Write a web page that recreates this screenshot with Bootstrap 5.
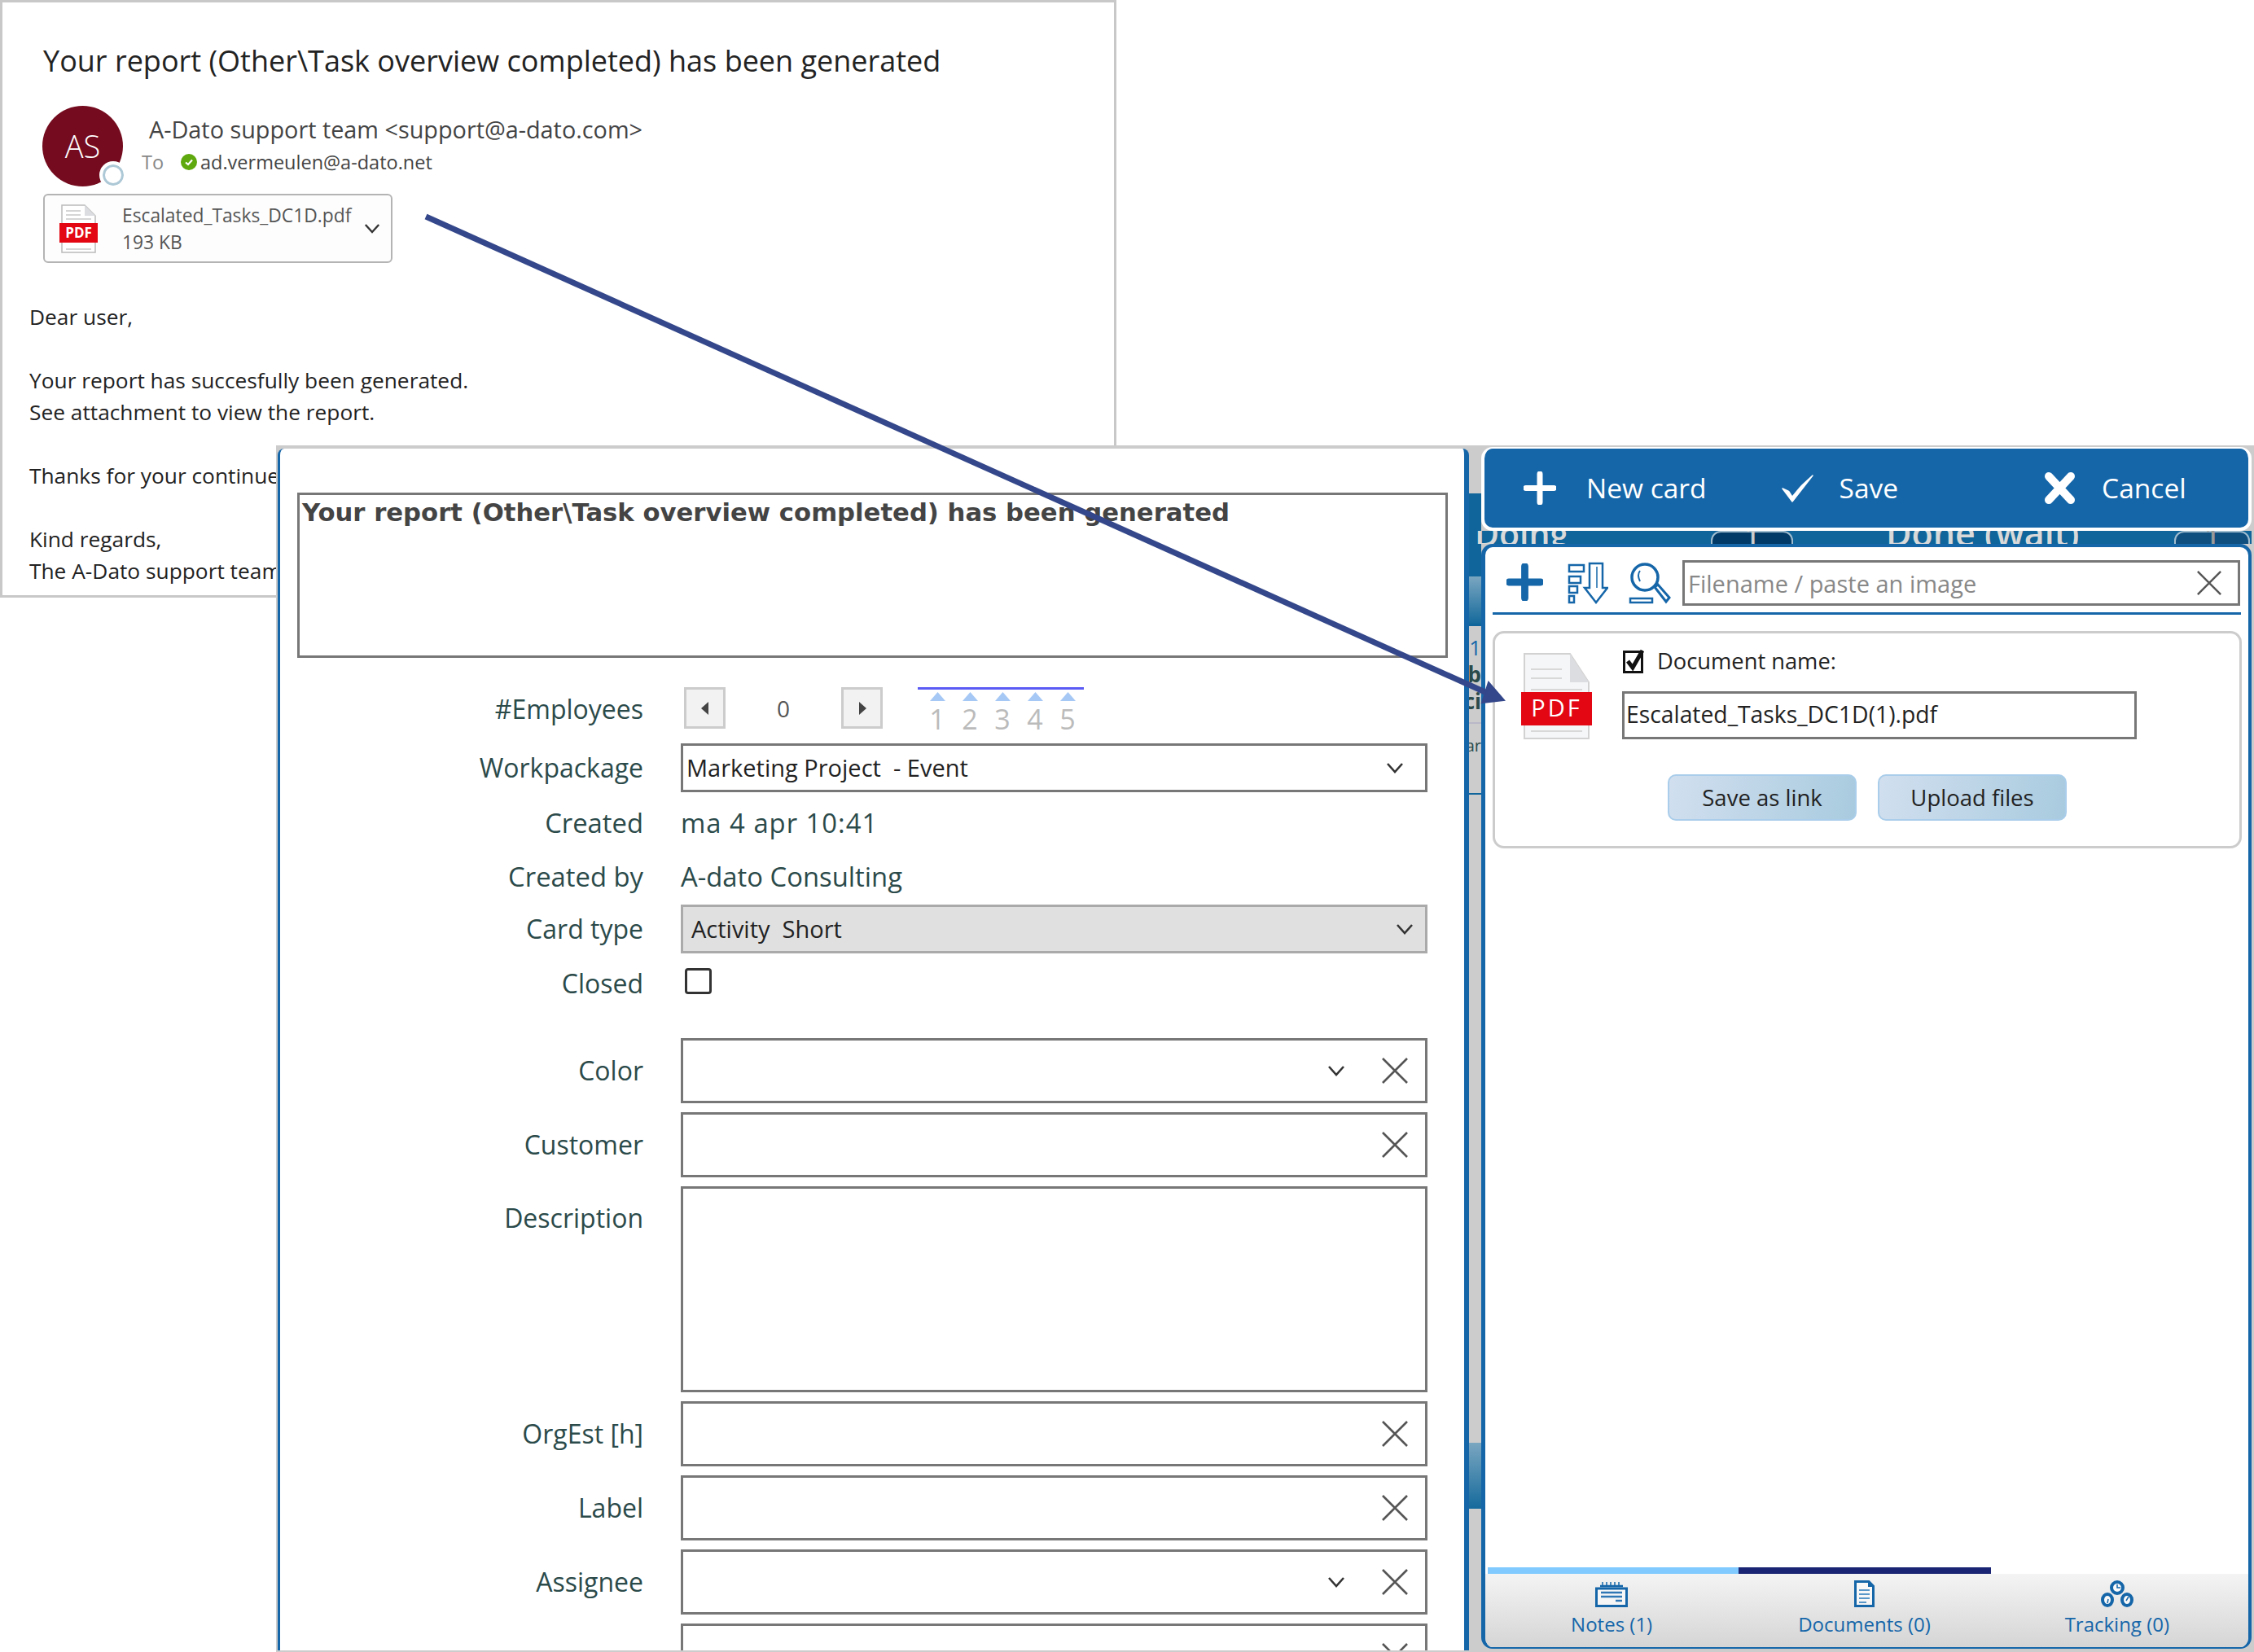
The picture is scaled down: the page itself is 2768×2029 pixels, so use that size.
<!DOCTYPE html>
<html lang="en">
<head>
    <meta charset="UTF-8">
    <title>Report mail and card</title>
    <link href="https://cdn.jsdelivr.net/npm/bootstrap@5.3.0/dist/css/bootstrap.min.css" rel="stylesheet">
    <style>
        html, body { margin: 0; background: #fff; }
        body { font-family: "Open Sans", "Noto Sans", sans-serif; }
        .stage { position: relative; width: 2768px; height: 2029px; overflow: hidden; }

        /* mail window */
        .mail-win { position: absolute; left: 0; top: 0; width: 1371px; height: 734px; border: 3px solid #c8c8c8; background: #fff; color: #222; }
        .mail-subject { font-size: 36px; line-height: 50px; margin: 47px 0 0 50px; color: #222; white-space: nowrap; }
        .mail-head { margin: 30px 0 0 49px; height: 99px; }
        .avatar { position: relative; width: 99px; height: 99px; flex: none; background: #740b1e; color: #fff; font-size: 38px; font-weight: 300; }
        .avatar-dot { position: absolute; right: -5px; bottom: -3px; width: 34px; height: 34px; border-radius: 50%; border: 4px solid #fff; box-shadow: inset 0 0 0 3px #adc8d6; background: #fff; }
        .mail-from { font-size: 28.800px; line-height: 40px; color: #444; margin: 9px 0 0 32px; white-space: nowrap; }
        .mail-to { font-size: 23.500px; line-height: 30px; color: #444; margin: 5px 0 0 23px; white-space: nowrap; }
        .mail-to .to-word { color: #888; width: 48px; }
        .attach { width: 429px; height: 85px; margin: 9px 0 0 50px; border: 2px solid #b4b4b4; border-radius: 6px; background: #fdfdfd; padding-left: 18px; }
        .attach-name { font-size: 22.800px; line-height: 33px; color: #555; margin-left: 30px; width: 297px; white-space: nowrap; }
        .mail-body { margin: 47px 0 0 33px; font-size: 26.300px; line-height: 39px; color: #222; white-space: nowrap; }
        .mail-body p { margin: 0 0 39px; }

        /* card window */
        .app-win { position: absolute; left: 339px; top: 547px; width: 2429px; height: 1482px; background: #ccc; padding: 4px 3px 4px 2px; }
        .form-win { width: 1463px; background: #fff; border-left: 3px solid #1566a9; border-right: 6px solid #1566a9; border-radius: 8px 8px 0 0; overflow: hidden; padding-top: 54px; flex: none; height: 1476px; }
        .title-box { width: 1413px; height: 203px; margin-left: 21px; border: 3px solid #777; font-family: "DejaVu Sans", sans-serif; font-weight: 700; font-size: 30.700px; line-height: 38px; color: #444; padding: 3px; white-space: nowrap; }
        .frm-row { display: flex; margin-top: 11px; }
        .frm-lbl { width: 446px; flex: none; text-align: right; color: #2b4a4a; font-size: 32px; line-height: 38px; white-space: nowrap; }
        .frm-val { margin-left: 46px; width: 917px; flex: none; }
        .box { border: 3px solid #777; background: #fff; height: 80px; padding-right: 20px; gap: 44px; }
        .box-sel { height: 60px; padding-right: 26px; color: #222; font-size: 29px; }
        .box-grey { background: #e0e0e0; border-color: #aaa; padding-right: 14px; }
        .box-sel .box-txt { padding-left: 4px; }
        .box-grey .box-txt { padding-left: 10px; }
        .box-tall { height: 253px; }
        .lbl-tall { padding-top: 20px; }
        .info-txt { color: #2b4a4a; font-size: 32.800px; line-height: 44px; }
        .date-txt { letter-spacing: 1px; }
        .row-spin { margin-top: 36px; }
        .row-wp { margin-top: 18px; }
        .row-created { margin-top: 16px; }
        .row-by { margin-top: 22px; }
        .row-type { margin-top: 12px; }
        .row-closed { margin-top: 18px; }
        .row-color { margin-top: 48px; }
        .spin-btn { width: 51px; height: 51px; background: #f2f2f2; border: 3px solid #ccc; border-radius: 0; padding: 0; }
        .spin-val { width: 142px; text-align: center; font-size: 28px; color: #555; }
        .ruler { margin-left: 43px; width: 204px; height: 51px; border-top: 3px solid #5a5af5; padding: 3px 0 0 4px; }
        .ruler-num { width: 40px; text-align: center; line-height: 1; font-size: 34px; color: #bbb; }
        .ruler-tick { display: block; margin: 0 auto 5px; }
        .closed-chk { width: 33px; height: 32px; margin: 0 0 0 5px; border: 3px solid #333; border-radius: 0; }

        /* bits of the board behind the panels */
        .board-strip { width: 15px; flex: none; }
        .strip-blue { height: 102px; margin-top: 55px; background: #10659a; }
        .strip-grad { height: 61px; background: linear-gradient(#7aa6c0, #156a9c); border-bottom: 3px solid #10659a; }
        .strip-txt { display: flex; justify-content: flex-end; font-size: 26px; font-weight: 700; color: #2b4a4a; line-height: 33px; overflow: hidden; white-space: nowrap; height: 33px; }
        .strip-first { margin-top: 10px; font-weight: 400; color: #1566a9; }
        .strip-faint { height: 2px; background: #b8b8c8; margin-top: 9px; }
        .strip-last { margin-top: 10px; height: 30px; font-size: 20px; font-weight: 400; }
        .strip-line { height: 2px; background: #10659a; margin-top: 45px; }
        .strip-thumb { height: 81px; margin-top: 796px; background: linear-gradient(#7aa6c0, #156a9c); }

        /* right panel */
        .side-win { width: 946px; flex: none; }
        .tool-win { height: 103px; margin-top: -2px; background: #1566a9; border: solid #fff; border-width: 2px 4px 4px; border-radius: 14px; color: #fff; font-size: 33.500px; position: relative; z-index: 2; }
        .tool-plus { margin-left: 48px; }
        .tool-new { margin-left: 37px; }
        .tool-check { margin-left: 91px; }
        .tool-save { margin-left: 31px; }
        .tool-x { margin-left: 179px; }
        .tool-cancel { margin-left: 32px; }
        .band { height: 16px; margin-left: -15px; background: #10659a; overflow: hidden; color: #d9d9d9; font-size: 41px; font-weight: 600; line-height: 6px; }
        .band-doing { margin-left: 7px; width: 290px; }
        .band-done { margin-left: 114px; width: 354px; font-size: 43px; }
        .pill { height: 30px; border: 2px solid #9fbccf; background: #013a66; border-radius: 12px; color: #ccc; text-align: center; font-size: 32px; }
        .pill-one { width: 101px; }
        .pill-two { width: 93px; background: #0f4f80; color: #999; }
        .side-body { height: 1357px; background: #fff; border: solid #1566a9; border-width: 4px 4px 2px 5px; border-radius: 14px; overflow: hidden; }
        .search-row { height: 83px; margin: 0 9px; border-bottom: 3px solid #1566a9; padding: 16px 1px 0 17px; }
        .ic-plus { margin-top: 4px; }
        .ic-sort { margin: 2px 0 0 30px; flex: none; }
        .ic-find { margin: 2px 0 0 25px; flex: none; }
        .fname-wrap { margin-left: 14px; }
        .fname-x { right: 22px; top: 12px; }
        .fname-inp { width: 685px; height: 56px; border: 3px solid #777; border-radius: 0; padding: 0 4px; font-size: 29px; color: #444; }
        .fname-inp::placeholder { color: #888; opacity: 1; }
        .doc-card { height: 267px; margin: 20px 8px 0 9px; border: 3px solid #ccc; border-radius: 14px; padding: 24px 0 0 32px; }
        .doc-col { margin: -6px 0 0 38px; }
        .doc-lbl { font-size: 27.300px; line-height: 32px; color: #222; margin-left: 16px; }
        .doc-inp { width: 632px; height: 59px; border: 3px solid #777; border-radius: 0; padding: 0 2px 4px; font-size: 28.300px; color: #222; margin: 21px 0 0 -1px; }
        .doc-btns { gap: 26px; margin: 42px 0 0 180px; }
        .doc-btn { width: 232px; height: 57px; background: linear-gradient(100deg, #d1dfef, #a9cbdf); border: 2px solid #a9cdea; border-radius: 10px; font-size: 27.500px; color: #222; padding: 0; }
        .tab-bars { height: 8px; }
        .tab-bar1 { width: 308px; background: #80caff; margin-left: 3px; }
        .tab-bar2 { width: 310px; background: #1a2573; }
        .tab-foot { height: 90px; padding-right: 6px; background: linear-gradient(#f4f4f4, #d5d5d5); color: #1566a9; font-size: 24px; }
        .tab-lbl { line-height: 41px; }
        .wire-arrow { position: absolute; left: 0; top: 0; z-index: 5; pointer-events: none; }
    </style>
</head>
<body>
<svg width="0" height="0" class="position-absolute">
    <defs>
        <symbol id="ic-x" viewBox="0 0 34 32"><path d="M2 1 32 31M32 1 2 31" fill="none" stroke="#555" stroke-width="2.600"/></symbol>
        <symbol id="ic-chev" viewBox="0 0 22 14"><path d="M2 2 11 12 20 2" fill="none" stroke="#333" stroke-width="2.600"/></symbol>
        <symbol id="ic-pdf" viewBox="0 0 87 107">
            <path d="M4 1H60L83 36V105H4Z" fill="#f5f6f7" stroke="#d2d2d2" stroke-width="2"/>
            <path d="M60 1V36H83Z" fill="#dcdde0"/>
            <path d="M12 20H50M12 31H50M12 45H75M12 96H75" fill="none" stroke="#d8d8d8" stroke-width="2"/>
            <rect y="48" width="87" height="41" fill="#e30613"/>
            <text x="43.500" y="78" text-anchor="middle" fill="#fff" font-family="Open Sans, sans-serif" font-size="29" letter-spacing="3">PDF</text>
        </symbol>
        <symbol id="ic-pdf-sm" viewBox="0 0 47 60">
            <path d="M3 1H31L44 14V59H3Z" fill="#fff" stroke="#bbb" stroke-width="1.500"/>
            <path d="M31 1V14H44Z" fill="#dcdde0"/>
            <path d="M8 8H26M8 13H26M8 18H39M8 55H39" fill="none" stroke="#c8c8c8" stroke-width="1.500"/>
            <rect y="23" width="47" height="24" fill="#e30613"/>
            <text x="23.500" y="41" text-anchor="middle" fill="#fff" font-family="Open Sans, sans-serif" font-weight="700" font-size="17">PDF</text>
        </symbol>
    </defs>
</svg>

<div class="stage">
    <!-- mail -->
    <div class="mail-win">
        <div class="mail-subject">Your report (Other\Task overview completed) has been generated</div>
        <div class="mail-head d-flex">
            <div class="avatar rounded-circle d-flex align-items-center justify-content-center">AS<span class="avatar-dot"></span></div>
            <div>
                <div class="mail-from">A-Dato support team &lt;support@a-dato.com&gt;</div>
                <div class="mail-to d-flex align-items-center">
                    <span class="to-word">To</span>
                    <svg width="20" height="20" viewBox="0 0 20 20" class="me-1"><circle cx="10" cy="10" r="10" fill="#5fa80e"/><path d="M6 10.500 9 13 14 7.500" fill="none" stroke="#fff" stroke-width="2.200"/></svg>
                    <span>ad.vermeulen@a-dato.net</span>
                </div>
            </div>
        </div>
        <div class="attach d-flex align-items-center">
            <svg width="47" height="60"><use href="#ic-pdf-sm"/></svg>
            <div class="attach-name">Escalated_Tasks_DC1D.pdf<br>193 KB</div>
            <svg width="20" height="13"><use href="#ic-chev"/></svg>
        </div>
        <div class="mail-body">
            <p>Dear user,</p>
            <p>Your report has succesfully been generated.<br>See attachment to view the report.</p>
            <p>Thanks for your continued support.</p>
            <p>Kind regards,<br>The A-Dato support team</p>
        </div>
    </div>

    <!-- card + panel -->
    <div class="app-win d-flex">
        <div class="form-win">
            <div class="title-box">Your report (Other\Task overview completed) has been generated</div>

            <div class="frm-row row-spin">
                <div class="frm-lbl pt-2">#Employees</div>
                <div class="frm-val d-flex">
                    <button class="btn spin-btn ms-1 d-flex align-items-center justify-content-center"><svg width="10" height="16"><path d="M9 0V16L0 8Z" fill="#444"/></svg></button>
                    <div class="spin-val align-self-center">0</div>
                    <button class="btn spin-btn d-flex align-items-center justify-content-center"><svg width="10" height="16"><path d="M1 0V16L10 8Z" fill="#444"/></svg></button>
                    <div class="ruler">
                        <div class="d-flex justify-content-center">
                            <div class="ruler-num"><svg width="19" height="11" class="ruler-tick"><path d="M9.500 0 19 11H0Z" fill="#a6c8f5"/></svg>1</div>
                            <div class="ruler-num"><svg width="19" height="11" class="ruler-tick"><path d="M9.500 0 19 11H0Z" fill="#a6c8f5"/></svg>2</div>
                            <div class="ruler-num"><svg width="19" height="11" class="ruler-tick"><path d="M9.500 0 19 11H0Z" fill="#a6c8f5"/></svg>3</div>
                            <div class="ruler-num"><svg width="19" height="11" class="ruler-tick"><path d="M9.500 0 19 11H0Z" fill="#a6c8f5"/></svg>4</div>
                            <div class="ruler-num"><svg width="19" height="11" class="ruler-tick"><path d="M9.500 0 19 11H0Z" fill="#a6c8f5"/></svg>5</div>
                        </div>
                    </div>
                </div>
            </div>

            <div class="frm-row row-wp">
                <div class="frm-lbl align-self-center">Workpackage</div>
                <div class="frm-val box box-sel d-flex align-items-center justify-content-between">
                    <span class="box-txt">Marketing Project &nbsp;- Event</span>
                    <svg width="22" height="14"><use href="#ic-chev"/></svg>
                </div>
            </div>
            <div class="frm-row row-created">
                <div class="frm-lbl info-txt">Created</div>
                <div class="frm-val info-txt date-txt">ma 4 apr 10:41</div>
            </div>
            <div class="frm-row row-by">
                <div class="frm-lbl info-txt">Created by</div>
                <div class="frm-val info-txt">A-dato Consulting</div>
            </div>
            <div class="frm-row row-type">
                <div class="frm-lbl align-self-center">Card type</div>
                <div class="frm-val box box-sel box-grey d-flex align-items-center justify-content-between">
                    <span class="box-txt">Activity &nbsp;Short</span>
                    <svg width="22" height="14"><use href="#ic-chev"/></svg>
                </div>
            </div>
            <div class="frm-row row-closed">
                <div class="frm-lbl align-self-center">Closed</div>
                <div class="frm-val d-flex"><input class="form-check-input closed-chk" type="checkbox" aria-label="Closed"></div>
            </div>

            <div class="frm-row row-color">
                <div class="frm-lbl align-self-center">Color</div>
                <div class="frm-val box d-flex align-items-center justify-content-end">
                    <svg width="22" height="14"><use href="#ic-chev"/></svg>
                    <svg width="34" height="32"><use href="#ic-x"/></svg>
                </div>
            </div>
            <div class="frm-row">
                <div class="frm-lbl align-self-center">Customer</div>
                <div class="frm-val box d-flex align-items-center justify-content-end">
                    <svg width="34" height="32"><use href="#ic-x"/></svg>
                </div>
            </div>
            <div class="frm-row">
                <div class="frm-lbl lbl-tall">Description</div>
                <div class="frm-val box box-tall"></div>
            </div>
            <div class="frm-row">
                <div class="frm-lbl align-self-center">OrgEst [h]</div>
                <div class="frm-val box d-flex align-items-center justify-content-end">
                    <svg width="34" height="32"><use href="#ic-x"/></svg>
                </div>
            </div>
            <div class="frm-row">
                <div class="frm-lbl align-self-center">Label</div>
                <div class="frm-val box d-flex align-items-center justify-content-end">
                    <svg width="34" height="32"><use href="#ic-x"/></svg>
                </div>
            </div>
            <div class="frm-row">
                <div class="frm-lbl align-self-center">Assignee</div>
                <div class="frm-val box d-flex align-items-center justify-content-end">
                    <svg width="22" height="14"><use href="#ic-chev"/></svg>
                    <svg width="34" height="32"><use href="#ic-x"/></svg>
                </div>
            </div>
            <div class="frm-row">
                <div class="frm-lbl"></div>
                <div class="frm-val box d-flex align-items-center justify-content-end">
                    <svg width="22" height="14"><use href="#ic-chev"/></svg>
                    <svg width="34" height="32"><use href="#ic-x"/></svg>
                </div>
            </div>
        </div>

        <div class="board-strip">
            <div class="strip-blue"></div>
            <div class="strip-grad"></div>
            <div class="strip-txt strip-first">01</div>
            <div class="strip-txt">b</div>
            <div class="strip-txt">ci</div>
            <div class="strip-faint"></div>
            <div class="strip-txt strip-last">ar</div>
            <div class="strip-line"></div>
            <div class="strip-thumb"></div>
        </div>

        <div class="side-win">
            <div class="tool-win d-flex align-items-center">
                <svg width="40" height="41" viewBox="0 0 40 41" class="tool-plus"><path d="M20 3V38M3 20.500H37" fill="none" stroke="#fff" stroke-width="7" stroke-linecap="round"/></svg>
                <span class="tool-new">New card</span>
                <svg width="41" height="36" viewBox="0 0 41 36" class="tool-check"><path d="M2 18 14 34 39 2 15 24Z" fill="#fff" stroke="#fff" stroke-width="1.500" stroke-linejoin="round"/><path d="M9 19 14 27 28 10 15 21Z" fill="#1566a9"/></svg>
                <span class="tool-save">Save</span>
                <svg width="39" height="39" viewBox="0 0 39 39" class="tool-x"><path d="M6 5 33 34M33 5 6 34" fill="none" stroke="#fff" stroke-width="10" stroke-linecap="round"/></svg>
                <span class="tool-cancel">Cancel</span>
            </div>
            <div class="band d-flex">
                <span class="band-doing">Doing</span>
                <span class="pill pill-one">1</span>
                <span class="band-done">Done (wait)</span>
                <span class="pill pill-two">1</span>
            </div>
            <div class="side-body d-flex flex-column">
                <div class="search-row d-flex align-items-start">
                    <svg width="46" height="46" viewBox="0 0 46 46" class="ic-plus"><path d="M23 3V43M3 23H43" fill="none" stroke="#1566a9" stroke-width="9" stroke-linecap="round"/></svg>
                    <svg width="50" height="52" viewBox="0 0 50 52" class="ic-sort">
                        <g fill="none" stroke="#1566a9" stroke-width="2.500">
                            <rect x="2" y="4" width="18" height="8"/><rect x="2" y="18" width="14" height="8"/><rect x="2" y="30" width="10" height="8"/><rect x="2" y="42" width="6" height="8"/>
                            <path d="M27 2H43V32H49L35 50 21 32H27Z"/><path d="M36 6V32" stroke-width="1.500"/>
                        </g>
                    </svg>
                    <svg width="52" height="52" viewBox="0 0 52 52" class="ic-find">
                        <g fill="none" stroke="#1566a9">
                            <circle cx="20" cy="19" r="16" stroke-width="3.500"/><path d="M14 11Q10 16 14 24" stroke-width="2"/>
                            <path d="M32 31 36 28 50 44 46 49Z" stroke-width="3"/>
                            <rect x="2" y="45" width="27" height="5" stroke-width="2.500"/>
                        </g>
                    </svg>
                    <div class="position-relative fname-wrap">
                        <input class="form-control fname-inp" type="text" placeholder="Filename / paste an image">
                        <svg width="32" height="32" class="position-absolute fname-x"><use href="#ic-x"/></svg>
                    </div>
                </div>
                <div class="doc-card">
                    <div class="d-flex">
                        <svg width="87" height="107" class="flex-none"><use href="#ic-pdf"/></svg>
                        <div class="doc-col">
                            <div class="d-flex align-items-center">
                                <svg width="26" height="30" viewBox="0 0 26 30"><rect x="1.500" y="3.500" width="22" height="25" fill="#fff" stroke="#111" stroke-width="3"/><path d="M6 15 12 23 24 2" fill="none" stroke="#111" stroke-width="5"/></svg>
                                <span class="doc-lbl">Document name:</span>
                            </div>
                            <input class="form-control doc-inp" type="text" value="Escalated_Tasks_DC1D(1).pdf">
                        </div>
                    </div>
                    <div class="d-flex doc-btns">
                        <button class="btn doc-btn">Save as link</button>
                        <button class="btn doc-btn">Upload files</button>
                    </div>
                </div>
                <div class="flex-grow-1"></div>
                <div class="tab-bars d-flex"><div class="tab-bar1"></div><div class="tab-bar2"></div></div>
                <div class="tab-foot row g-0 text-center">
                    <div class="col-4">
                        <svg width="40" height="33" viewBox="0 0 40 33" class="d-block mx-auto mt-2">
                            <path d="M6 7H34" stroke="#1566a9" stroke-width="2.500"/><path d="M9 6V2M14 6V2M19 6V2M24 6V2M29 6V2" stroke="#1566a9" stroke-width="1.500"/>
                            <rect x="1.500" y="10" width="37" height="21.500" fill="#fff" fill-opacity=".6" stroke="#1566a9" stroke-width="3"/>
                            <path d="M7 15H33M7 20H33M25 25H33" stroke="#2f77b5" stroke-width="2.500"/>
                        </svg>
                        <div class="tab-lbl">Notes (1)</div>
                    </div>
                    <div class="col-4">
                        <svg width="25" height="33" viewBox="0 0 25 33" class="d-block mx-auto mt-2">
                            <path d="M1.500 1.500H18L23.500 7V31.500H1.500Z" fill="#fff" fill-opacity=".6" stroke="#1566a9" stroke-width="3"/>
                            <path d="M17 1 24 8H17Z" fill="#1566a9"/>
                            <path d="M6 12H19M6 17H19M6 22H19M6 27H15" stroke="#5a97c9" stroke-width="2"/>
                        </svg>
                        <div class="tab-lbl">Documents (0)</div>
                    </div>
                    <div class="col-4">
                        <svg width="40" height="33" viewBox="0 0 40 33" class="d-block mx-auto mt-2">
                            <g fill="#fff" fill-opacity=".7" stroke="#1566a9" stroke-width="4">
                                <circle cx="20" cy="9" r="7"/><ellipse cx="8" cy="24" rx="6" ry="7"/><ellipse cx="32" cy="24" rx="6" ry="7"/>
                            </g>
                            <path d="M20 5V9H24M8 28 9 23M34 20 31 25" fill="none" stroke="#1566a9" stroke-width="1.500"/>
                        </svg>
                        <div class="tab-lbl">Tracking (0)</div>
                    </div>
                </div>
            </div>
        </div>
    </div>

    <!-- arrow from the attachment to the upload panel -->
    <svg class="wire-arrow" width="2768" height="2029" viewBox="0 0 2768 2029">
        <path d="M523 266 1826 851" fill="none" stroke="#34478a" stroke-width="7"/>
        <path d="M1828 838 1847 860 1820 863Z" fill="#34478a" stroke="#34478a" stroke-width="2"/>
    </svg>
</div>
</body>
</html>
